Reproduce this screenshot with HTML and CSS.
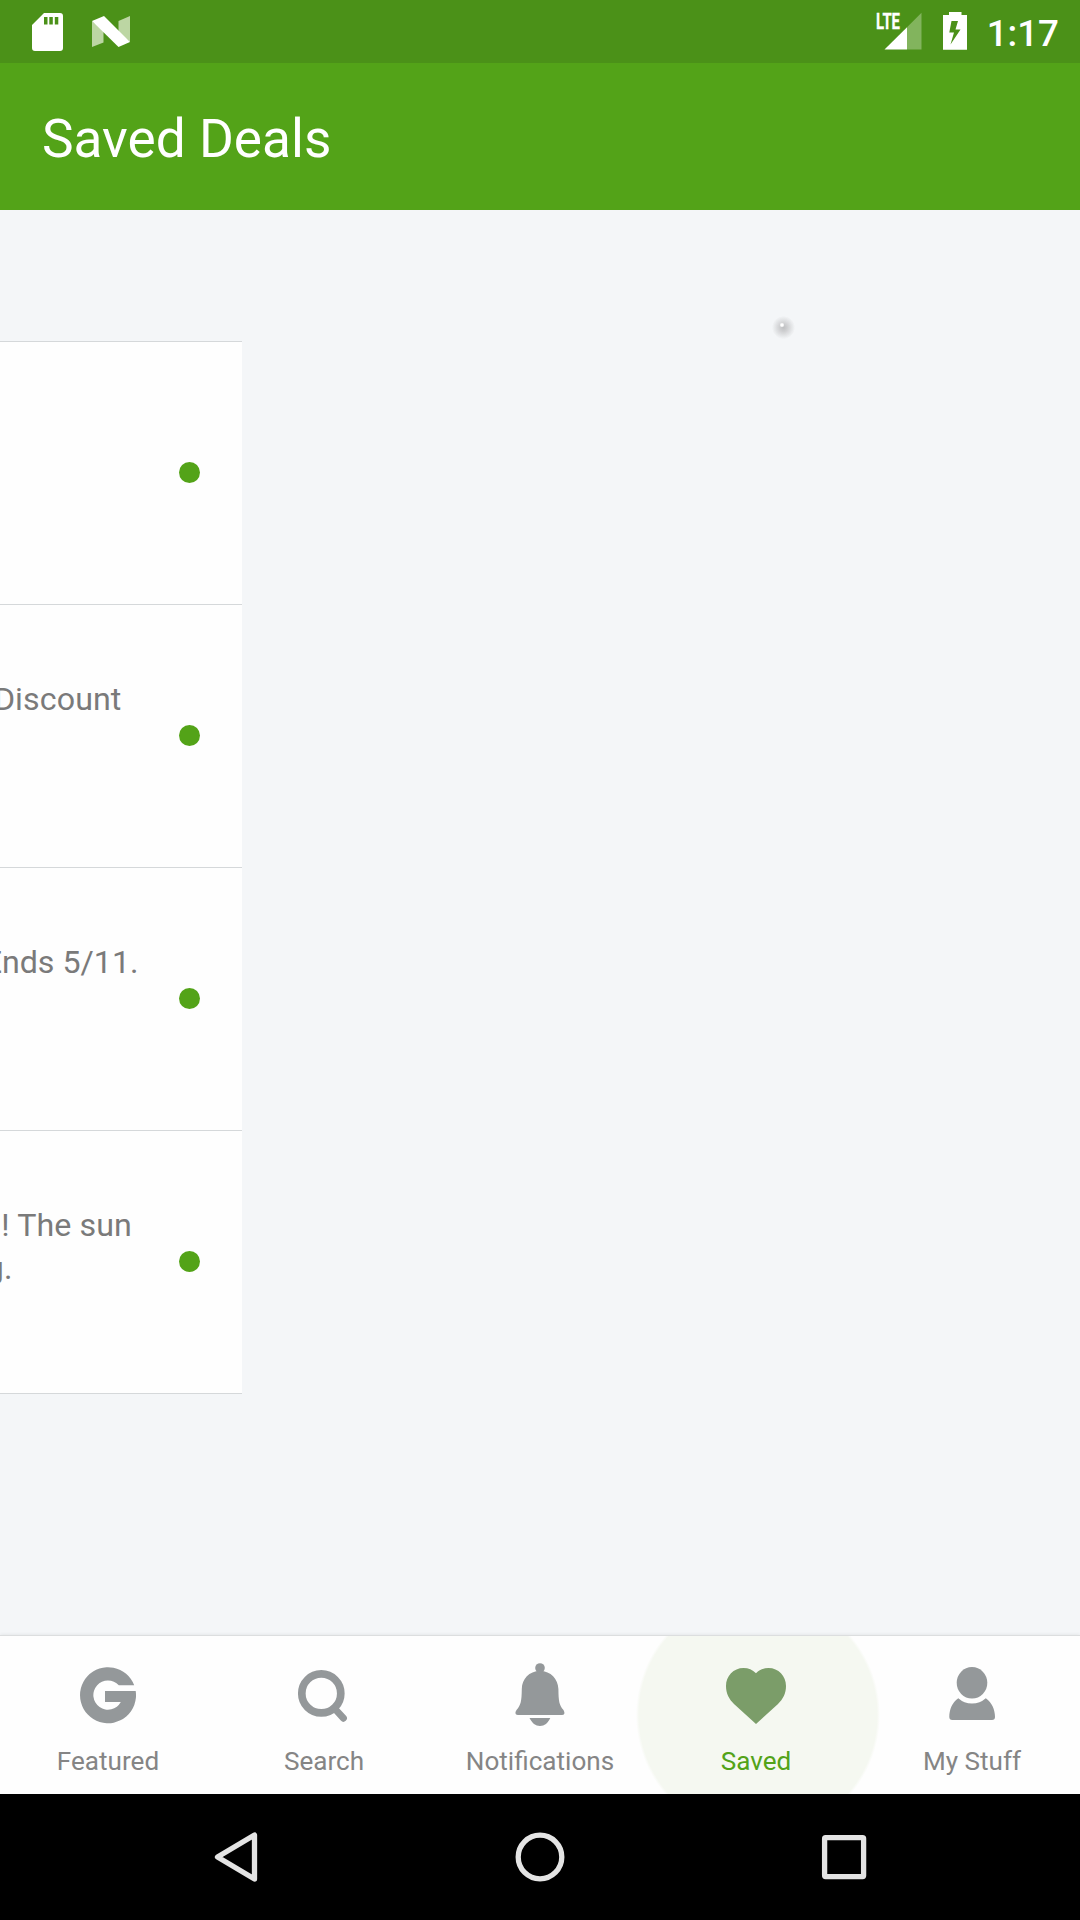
FILE: index.html
```html
<!DOCTYPE html>
<html lang="en">
<head>
<meta charset="utf-8">
<title>Saved Deals</title>
<link rel="stylesheet" href="styles.css">
</head>
<body>
<div class="screen">
  <header class="status-bar">
    <div class="status-left">
      <svg class="sd-icon" viewBox="0 0 31 38"><path fill="#fff" fill-rule="evenodd" d="M12 0H28Q31 0 31 3V35Q31 38 28 38H3Q0 38 0 35V12ZM12 4V11.5H15.5V4ZM17.3 4V11.5H20.8V4ZM22.8 4V11.5H26.3V4Z"/></svg>
      <svg class="n-icon" viewBox="0 0 38 31"><path fill="#bcd6a3" d="M0 5L11.5 14V26.5L0 31ZM26.5 5L38 0V26L26.5 17Z"/><path fill="#fff" d="M0 5L12 0L38 26L26.5 31Z"/></svg>
    </div>
    <div class="status-right">
      <svg class="signal-icon" viewBox="0 0 46 38"><path fill="#82b45d" d="M31 15.3L45.5.8V37.5H31Z"/><path fill="#fff" d="M8.5 37.5L31 15.3V37.5Z"/><text class="lte" x="0" y="17" textLength="24" lengthAdjust="spacingAndGlyphs">LTE</text></svg>
      <svg class="battery-icon" viewBox="0 0 24 38"><path fill="#fff" fill-rule="evenodd" d="M6 0H18.5V3H24V37.8H0V3H6ZM8.5 9L6.3 20.5H11L7.5 32.5L17.5 17.5H12.5L15 9Z"/></svg>
      <time class="clock">1:17</time>
    </div>
  </header>
  <div class="app-bar"><h1>Saved Deals</h1></div>
  <main class="content">
    <ul class="deals">
      <li class="deal"><div class="deal-text"></div><span class="dot"></span></li>
      <li class="deal"><div class="deal-text"><p class="discount">Discount</p></div><span class="dot"></span></li>
      <li class="deal"><div class="deal-text"><p class="ends">Ends 5/11.</p></div><span class="dot"></span></li>
      <li class="deal"><div class="deal-text"><p class="sun">! The sun</p><p class="sun-end">g.</p></div><span class="dot"></span></li>
    </ul>
    <span class="pointer"></span>
  </main>
  <nav class="tabs">
    <a class="tab">
      <svg viewBox="0 0 72 72"><path d="M62.2 29.3A28 28 0 1 0 63.7 35H33V46H48.8A14.6 14.6 0 1 1 46.8 29.3Z"/></svg>
      <span>Featured</span>
    </a>
    <a class="tab">
      <svg viewBox="0 0 72 72"><circle class="line" cx="33.3" cy="37.4" r="19.5"/><path class="line handle" d="M47 53L55.4 62.2"/></svg>
      <span>Search</span>
    </a>
    <a class="tab">
      <svg viewBox="0 0 72 72"><circle cx="36" cy="12" r="4.8"/><path d="M36 15C25 15 18 23 17.8 33C17.6 45 17 49 12.5 54L11.5 56Q11 59 14 59H58Q61 59 60.3 56L59.5 54C55 49 54.6 45 54.4 33C54 23 47 15 36 15ZM25.5 62H46.3C44 67 40.5 70 36 70S28 67 25.5 62Z"/></svg>
      <span>Notifications</span>
    </a>
    <a class="tab active">
      <svg viewBox="0 0 72 72"><path d="M36 17.3C32.5 13.8 28.5 12 23.5 12C13.5 12 6 20 6 30C6 37.5 9 43 14 48L36 68L58 48C63 43 66 37.5 66 30C66 20 58.5 12 48.5 12C43.5 12 39.5 13.8 36 17.3Z"/></svg>
      <span>Saved</span>
    </a>
    <a class="tab">
      <svg viewBox="0 0 72 72"><ellipse cx="36" cy="26.8" rx="15.3" ry="15.8"/><path d="M22.3 42.3Q28 47.5 36 47.5T49.8 42.3C56 46.5 59 54 59 61Q59 64 56 64H16.3Q13.3 64 13.3 61C13.3 54 16 46.5 22.3 42.3Z"/></svg>
      <span>My Stuff</span>
    </a>
  </nav>
  <footer class="system-nav">
    <svg viewBox="0 0 56 56"><path d="M46.5 6V50L9.5 28Z"/></svg>
    <svg viewBox="0 0 56 56"><circle cx="28" cy="28" r="21.8"/></svg>
    <svg viewBox="0 0 56 56"><rect x="8.6" y="8.6" width="39" height="39" rx="1"/></svg>
  </footer>
</div>
</body>
</html>
```
FILE: styles.css
```css
* { box-sizing: border-box; margin: 0; padding: 0; }
body { font-family: Roboto, "Liberation Sans", sans-serif; background: #f4f6f8; }
svg { display: block; flex: none; }

.screen { width: 1080px; height: 1920px; display: flex; flex-direction: column; overflow: hidden; }

.status-bar { height: 63px; flex: none; background: #4b9118; display: flex; justify-content: space-between; align-items: flex-start; padding: 12px 21px 0 32px; }
.status-left, .status-right { display: flex; align-items: flex-start; }
.sd-icon { width: 31px; height: 38px; margin-top: 1px; }
.n-icon { width: 38px; height: 31px; margin: 4px 0 0 29px; }
.signal-icon { width: 46px; height: 38px; overflow: visible; }
.lte { font: 700 21.5px Roboto, sans-serif; fill: #fff; stroke: #fff; stroke-width: .3; }
.battery-icon { width: 24px; height: 38px; margin-left: 21px; }
.clock { margin-left: 20px; font-size: 36.75px; font-weight: 500; line-height: 43px; color: #fff; }

.app-bar { height: 147px; flex: none; background: #53a318; display: flex; align-items: center; padding-left: 42px; }
.app-bar h1 { font-size: 53.2px; font-weight: 400; line-height: 62px; color: #fff; padding-top: 4px; }

.content { flex: 1; position: relative; background: #f4f6f8; padding-top: 131px; }
.deals { list-style: none; width: 242px; border-top: 1px solid #d5d8da; }
.deal { height: 263px; display: flex; justify-content: space-between; align-items: flex-start; background: #fefefe; border-bottom: 1px solid #d5d8da; }
.deal-text { width: 160px; padding-top: 73px; }
.deal-text p { display: flex; justify-content: flex-end; white-space: nowrap; font-size: 32.2px; letter-spacing: .1px; line-height: 43px; color: #7a7a7a; }
.deal-text .discount { padding-right: 38.5px; }
.deal-text .ends { padding-right: 21.5px; letter-spacing: 0; }
.deal-text .sun { padding-right: 28px; }
.deal-text .sun-end { padding-right: 147.5px; }
.dot { width: 21px; height: 21px; border-radius: 50%; background: #53a318; margin: 120px 42px 0 0; }

.pointer { position: absolute; left: 772px; top: 106px; width: 23px; height: 23px; border-radius: 50%; background: radial-gradient(circle at 10px 9px, #fff 0 1.2px, transparent 2.5px), radial-gradient(circle closest-side, #bfc0c2 0, #cfd0d2 35%, rgba(244, 246, 248, 0) 100%); }

.tabs { height: 158px; flex: none; display: flex; background: #fefefe; position: relative; box-shadow: 0 -1px 0 #dcdedf, 0 -2px 3px rgba(0, 0, 0, .06); }
.tab { width: 216px; display: flex; flex-direction: column; align-items: center; padding-top: 20px; color: #858585; }
.tab svg { width: 72px; height: 72px; fill: #94989a; }
.tab span { font-size: 26.1px; line-height: 30px; margin-top: 18px; }
.tab .line { fill: none; stroke: #94989a; stroke-width: 7.7; }
.tab .handle { stroke-width: 7; stroke-linecap: round; }
.tab.active { width: 248px; margin: 0 -16px; color: #53a318; background: radial-gradient(circle at 126px 79px, #f5f8f1 119px, transparent 122px); }
.tab.active svg { fill: #7b9d69; }

.system-nav { height: 126px; flex: none; background: #000; display: flex; justify-content: center; align-items: center; gap: 248px; }
.system-nav svg { width: 56px; height: 56px; fill: none; stroke: #e4e4e4; stroke-width: 5.3; stroke-linejoin: round; }
```
